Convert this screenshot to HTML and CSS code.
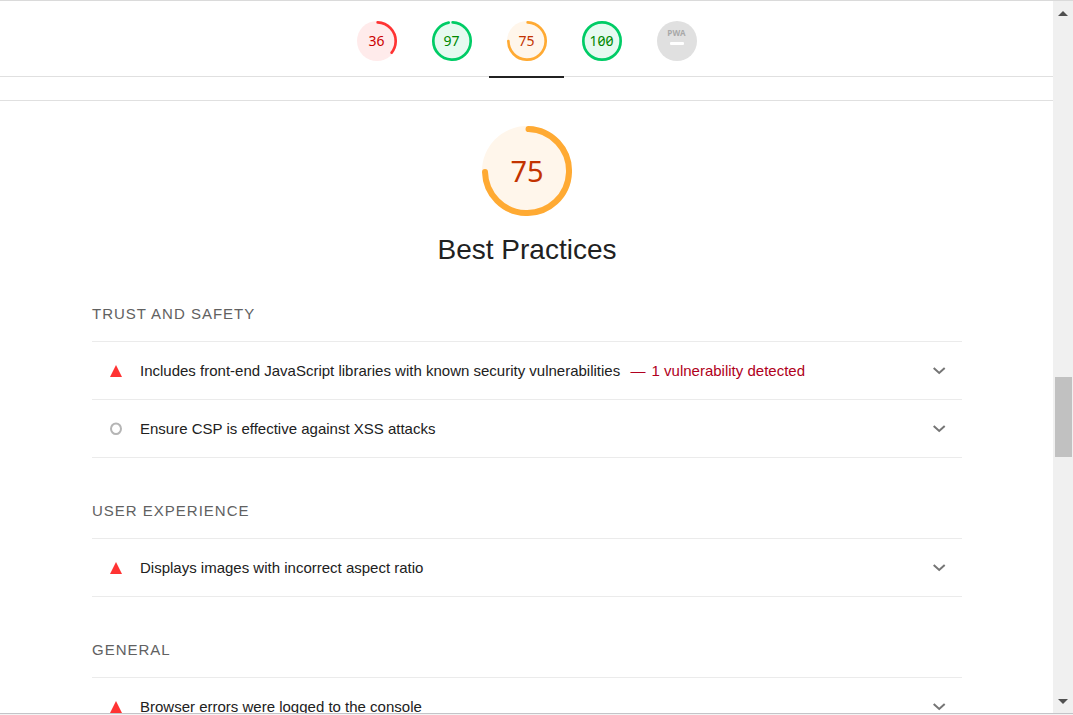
FILE: index.html
```html
<!DOCTYPE html>
<html lang="en">
<head>
<meta charset="utf-8">
<title>Lighthouse Report</title>
<link rel="stylesheet" href="styles.css">
</head>
<body>
<div class="window">
  <main class="report">
    <nav class="scores" aria-label="Categories">
      <a class="score fail" href="#performance" aria-label="Performance 36">
        <svg class="ring" viewBox="0 0 120 120"><circle class="base" cx="60" cy="60" r="60"/><circle class="arc" cx="60" cy="60" r="56" stroke-dasharray="122.7 351.9" transform="rotate(-87.9 60 60)"/></svg>
        <span class="value">36</span>
      </a>
      <a class="score pass" href="#accessibility" aria-label="Accessibility 97">
        <svg class="ring" viewBox="0 0 120 120"><circle class="base" cx="60" cy="60" r="60"/><circle class="arc" cx="60" cy="60" r="56" stroke-dasharray="337.3 351.9" transform="rotate(-87.9 60 60)"/></svg>
        <span class="value">97</span>
      </a>
      <a class="score average current" href="#best-practices" aria-label="Best Practices 75">
        <svg class="ring" viewBox="0 0 120 120"><circle class="base" cx="60" cy="60" r="60"/><circle class="arc" cx="60" cy="60" r="56" stroke-dasharray="259.9 351.9" transform="rotate(-87.9 60 60)"/></svg>
        <span class="value">75</span>
      </a>
      <a class="score pass" href="#seo" aria-label="SEO 100">
        <svg class="ring" viewBox="0 0 120 120"><circle class="base" cx="60" cy="60" r="60"/><circle class="arc" cx="60" cy="60" r="56"/></svg>
        <span class="value">100</span>
      </a>
      <a class="score pwa" href="#pwa">
        <span class="pwa-badge"><span class="pwa-name">PWA</span><span class="pwa-dash"></span></span>
      </a>
    </nav>

    <section class="category" id="best-practices">
      <header class="category-header">
        <div class="gauge average">
          <svg class="ring" viewBox="0 0 120 120"><circle class="base" cx="60" cy="60" r="60"/><circle class="arc" cx="60" cy="60" r="56" stroke-dasharray="259.9 351.9" transform="rotate(-87.9 60 60)"/></svg>
          <span class="value">75</span>
        </div>
        <h1 class="category-title">Best Practices</h1>
      </header>

      <section class="group">
        <h2 class="group-title">Trust and Safety</h2>
        <details class="audit">
          <summary class="audit-row">
            <svg class="mark" viewBox="0 0 12 12"><path class="mark-fail" d="M6 0l6 12H0z"/></svg>
            <span class="audit-title">Includes front-end JavaScript libraries with known security vulnerabilities <span class="audit-note">— <span class="audit-detail">1 vulnerability detected</span></span></span>
            <svg class="chevron" viewBox="0 0 12 12"><path d="M.7 3l5.5 5 5.5-5"/></svg>
          </summary>
        </details>
        <details class="audit">
          <summary class="audit-row">
            <svg class="mark" viewBox="0 0 12 12"><ellipse class="mark-info" cx="6" cy="5.7" rx="5" ry="5.3"/></svg>
            <span class="audit-title">Ensure CSP is effective against XSS attacks</span>
            <svg class="chevron" viewBox="0 0 12 12"><path d="M.7 3l5.5 5 5.5-5"/></svg>
          </summary>
        </details>
      </section>

      <section class="group">
        <h2 class="group-title">User Experience</h2>
        <details class="audit">
          <summary class="audit-row">
            <svg class="mark" viewBox="0 0 12 12"><path class="mark-fail" d="M6 0l6 12H0z"/></svg>
            <span class="audit-title">Displays images with incorrect aspect ratio</span>
            <svg class="chevron" viewBox="0 0 12 12"><path d="M.7 3l5.5 5 5.5-5"/></svg>
          </summary>
        </details>
      </section>

      <section class="group">
        <h2 class="group-title">General</h2>
        <details class="audit">
          <summary class="audit-row">
            <svg class="mark" viewBox="0 0 12 12"><path class="mark-fail" d="M6 0l6 12H0z"/></svg>
            <span class="audit-title">Browser errors were logged to the console</span>
            <svg class="chevron" viewBox="0 0 12 12"><path d="M.7 3l5.5 5 5.5-5"/></svg>
          </summary>
        </details>
      </section>
    </section>
  </main>

  <div class="scrollbar">
    <button class="scroll-button" type="button" aria-label="Scroll up"><svg class="scroll-arrow" viewBox="0 0 10 5"><path d="M5 0l5 5H0z"/></svg></button>
    <div class="track"><div class="thumb"></div></div>
    <button class="scroll-button" type="button" aria-label="Scroll down"><svg class="scroll-arrow" viewBox="0 0 10 5"><path d="M0 0h10L5 5z"/></svg></button>
  </div>
</div>
</body>
</html>
```

FILE: styles.css
```css
* {
  box-sizing: border-box;
}

body {
  margin: 0;
  background: #f3f3f3;
  color: #212121;
  font: 15px/20px "Liberation Sans", Arial, sans-serif;
}

.window {
  display: grid;
  grid-template-columns: minmax(0, 1fr) 20px;
  height: calc(100vh - 1px);
  border-top: 1px solid #dadada;
  border-bottom: 1px solid #c4c4c8;
  background: #fff;
}

.report {
  min-height: 0;
  overflow: hidden;
}

/* Score strip */
.scores {
  display: flex;
  justify-content: center;
  height: 76px;
  border-bottom: 1px solid #e0e0e0;
}

.score {
  display: grid;
  justify-items: center;
  align-content: start;
  width: 75px;
  height: 77px;
  padding-top: 20px;
  text-decoration: none;
  font: 14px/40px "Noto Sans", sans-serif;
  font-variant-numeric: slashed-zero;
}

.score > *,
.gauge > * {
  grid-area: 1 / 1;
}

.score.current {
  border-bottom: 2px solid #212121;
}

.score .ring {
  width: 40px;
  height: 40px;
}

.base {
  fill: var(--tint);
}

.arc {
  fill: none;
  stroke: var(--tone);
  stroke-width: 8;
  stroke-linecap: round;
}

.value {
  color: var(--ink);
}

.fail {
  --tone: #f33;
  --tint: #ffebeb;
  --ink: #c00;
}

.average {
  --tone: #fa3;
  --tint: #fff6eb;
  --ink: #c33300;
}

.pass {
  --tone: #0c6;
  --tint: #e6faf0;
  --ink: #080;
}

.pwa-badge {
  display: flex;
  flex-direction: column;
  align-items: center;
  gap: 5px;
  width: 40px;
  height: 40px;
  padding-top: 7px;
  border-radius: 50%;
  background: #e0e0e0;
}

.pwa-name {
  color: #a8a8a8;
  font: bold 8px/9px "Open Sans", sans-serif;
}

.pwa-dash {
  width: 14px;
  height: 3px;
  border-radius: 1px;
  background: #fff;
}

/* Category */
.category {
  margin-top: 23px;
  padding: 25px 0 0 1px;
  border-top: 1px solid #e0e0e0;
}

.category-header {
  display: flex;
  flex-direction: column;
  align-items: center;
  gap: 16px;
}

.gauge {
  display: grid;
  place-items: center;
  font: 29px/36px "Noto Sans", sans-serif;
}

.gauge .ring {
  width: 90px;
  height: 90px;
}

.category-title {
  margin: 0;
  font-size: 28px;
  line-height: 36px;
  font-weight: 400;
}

.group {
  max-width: 870px;
  margin: 36px auto 0;
}

.group + .group {
  margin-top: 43px;
}

.group-title {
  margin: 0;
  padding-bottom: 17px;
  border-bottom: 1px solid #ebebeb;
  color: #616161;
  font-size: 15px;
  line-height: 20px;
  font-weight: 400;
  letter-spacing: 1px;
  text-transform: uppercase;
}

.audit {
  border-bottom: 1px solid #ebebeb;
}

.audit-row {
  display: flex;
  align-items: center;
  height: 57px;
  padding: 0 17px 0 18px;
  list-style: none;
  cursor: pointer;
}

.mark {
  width: 12px;
  height: 12px;
  margin-right: 18px;
  overflow: visible;
}

.mark-fail {
  fill: #f33;
}

.mark-info {
  fill: none;
  stroke: #b5b5b5;
  stroke-width: 2;
}

.audit-title {
  flex: 1;
}

.audit-note {
  margin-left: 6px;
  color: #b00020;
}

.audit-detail {
  margin-left: 2px;
}

.chevron {
  width: 12px;
  height: 12px;
  fill: none;
  stroke: #757575;
  stroke-width: 2;
  overflow: visible;
}

/* Scrollbar */
.scrollbar {
  display: flex;
  flex-direction: column;
  background: #f0f0f0;
}

.scroll-button {
  display: grid;
  place-items: center;
  height: 24px;
  padding: 0;
  border: 0;
  background: none;
}

.scroll-arrow {
  width: 10px;
  height: 5px;
  fill: #505050;
}

.track {
  flex: 1;
  display: grid;
  grid-template-rows: 53% 12% 1fr;
  padding: 0 1px 0 2px;
}

.thumb {
  grid-row: 2;
  background: #c1c1c1;
}
```
